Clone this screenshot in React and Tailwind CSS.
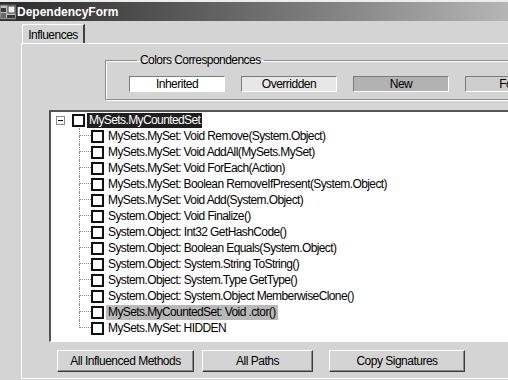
import React from 'react';

const methods = [
  'MySets.MySet: Void Remove(System.Object)',
  'MySets.MySet: Void AddAll(MySets.MySet)',
  'MySets.MySet: Void ForEach(Action)',
  'MySets.MySet: Boolean RemoveIfPresent(System.Object)',
  'MySets.MySet: Void Add(System.Object)',
  'System.Object: Void Finalize()',
  'System.Object: Int32 GetHashCode()',
  'System.Object: Boolean Equals(System.Object)',
  'System.Object: System.String ToString()',
  'System.Object: System.Type GetType()',
  'System.Object: System.Object MemberwiseClone()',
  'MySets.MyCountedSet: Void .ctor()',
  'MySets.MySet: HIDDEN',
];

const swatches = [
  { label: 'Inherited', bg: 'bg-white' },
  { label: 'Overridden', bg: 'bg-[#e6e6e6]' },
  { label: 'New', bg: 'bg-[#b2b2b2]' },
  { label: 'Fonts', bg: 'bg-[#cdcdcd]' },
];

const Check = () => (
  <span className="block w-[13px] h-[13px] shrink-0 bg-white border-2 border-[#111]" />
);

const Button = ({ children, className }) => (
  <button className={`h-[22px] shrink-0 bg-[#d4d4d4] border border-t-white border-l-white border-r-[#3a3a3a] border-b-[#3a3a3a] shadow-[inset_-1px_-1px_0_#888] text-[12px] tracking-[-0.5px] text-black ${className}`}>
    {children}
  </button>
);

const AppIcon = () => (
  <svg width="16" height="16" viewBox="0 0 16 16" className="shrink-0">
    <rect x="0" y="1" width="16" height="14" fill="#bdbdbd" stroke="#5a5a5a" />
    <rect x="1" y="4" width="5" height="4" fill="#3a3a3a" />
    <rect x="1" y="9" width="5" height="5" fill="#6a6a6a" />
    <rect x="8" y="2" width="7" height="7" fill="#efefef" stroke="#444" />
    <rect x="7" y="11" width="8" height="3" fill="#3a3a3a" />
  </svg>
);

export default function App() {
  return (
    <div className="w-[508px] h-[380px] overflow-hidden bg-[#d4d4d4] font-['Liberation_Sans',Arial,sans-serif] text-black">
      {/* title bar */}
      <div className="border-t-2 border-[#ededed] h-[21px] flex items-center gap-[1px] bg-gradient-to-r from-[#2b2b2b] to-[#b6b6b6]">
        <AppIcon />
        <span className="text-white font-bold text-[12px] leading-none">DependencyForm</span>
      </div>

      {/* tab header */}
      <div className="mt-[3px] ml-[22px] w-[63px] h-[19px] flex items-center justify-center border-t border-l border-white border-r-2 border-r-[#404040] rounded-tl-[2px] text-[12px] tracking-[-0.5px] leading-none pt-[1px]">
        Influences
      </div>

      {/* tab panel */}
      <div className="ml-[21px] h-[336px] border-t border-l border-b border-white">
        <fieldset className="ml-[83px] mt-[9px] w-[420px] h-[47px] border border-[#8a8a8a] shadow-[inset_1px_1px_0_#fff,1px_1px_0_#fff] pl-[23px] pt-[9px]">
          <legend className="ml-[8px] px-[3px] text-[12px] tracking-[-0.55px] leading-[14px]">Colors Correspondences</legend>
          <div className="flex gap-[16px]">
            {swatches.map((s) => (
              <div
                key={s.label}
                className={`w-[96px] h-[16px] shrink-0 flex items-center justify-center border border-t-[#7a7a7a] border-l-[#7a7a7a] border-r-white border-b-white text-[12px] tracking-[-0.5px] leading-none ${s.bg}`}
              >
                {s.label}
              </div>
            ))}
          </div>
        </fieldset>

        {/* tree view */}
        <div className="ml-[27px] mt-[10px] w-[480px] h-[232px] bg-white border-t-2 border-l-2 border-t-[#555] border-l-[#555] border-b border-white text-[12px] tracking-[-0.6px] leading-[16px]">
          <div className="flex items-center h-[16px] pl-[5px]">
            <span className="w-[9px] h-[9px] border border-[#8a8a8a] flex items-center justify-center shrink-0">
              <span className="block w-[5px] h-[1px] bg-black" />
            </span>
            <span className="w-[7px] shrink-0" />
            <Check />
            <span className="ml-[2px] px-[2px] bg-[#1e1e1e] text-white h-[15px] flex items-center">MySets.MyCountedSet</span>
          </div>
          {methods.map((m, i) => {
            const last = i === methods.length - 1;
            const selected = m === 'MySets.MyCountedSet: Void .ctor()';
            return (
              <div key={m} className="flex items-center h-[16px] pl-[28px]">
                <div className="w-[12px] h-[16px] shrink-0 flex flex-col">
                  <div className="h-[8px] border-l border-b border-dotted border-[#888]" />
                  <div className={`h-[8px] ${last ? '' : 'border-l border-dotted border-[#888]'}`} />
                </div>
                <Check />
                <span className={`ml-[2px] px-[2px] whitespace-nowrap h-[15px] flex items-center ${selected ? 'bg-[#b9b9b9]' : ''}`}>{m}</span>
              </div>
            );
          })}
        </div>

        {/* buttons */}
        <div className="flex mt-[8px] ml-[35px]">
          <Button className="w-[137px]">All Influenced Methods</Button>
          <Button className="w-[111px] ml-[8px]">All Paths</Button>
          <Button className="w-[136px] ml-[16px]">Copy Signatures</Button>
        </div>
      </div>
    </div>
  );
}
